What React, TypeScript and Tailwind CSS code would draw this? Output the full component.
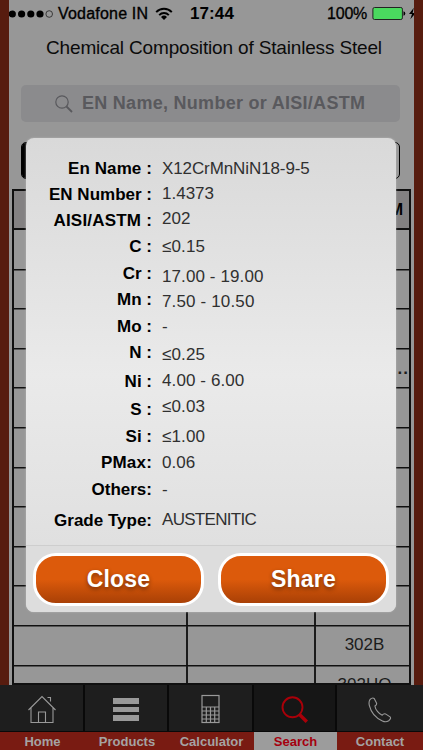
import React from "react";

interface Field {
    text: string;
    className: string;
}

interface TabProps {
    label: string;
    width: string;
    active?: boolean;
    last?: boolean;
    children: React.ReactNode;
}

const labels: Field[] = [
    {text: "En Name :", className: "mt-[20px] tracking-[0.1px]"},
    {text: "EN Number :", className: "mt-[6px]"},
    {text: "AISI/ASTM :", className: "mt-[6px] tracking-[0.2px]"},
    {text: "C :", className: "mt-[6px]"},
    {text: "Cr :", className: "mt-[7px]"},
    {text: "Mn :", className: "mt-[6px]"},
    {text: "Mo :", className: "mt-[7px]"},
    {text: "N :", className: "mt-[6px]"},
    {text: "Ni :", className: "mt-[9px]"},
    {text: "S :", className: "mt-[8px]"},
    {text: "Si :", className: "mt-[7px]"},
    {text: "PMax:", className: "mt-[6px] tracking-[0.2px]"},
    {text: "Others:", className: "mt-[7px]"},
    {text: "Grade Type:", className: "mt-[11px]"},
];

const values: Field[] = [
    {text: "X12CrMnNiN18-9-5", className: "mt-[20px] tracking-[-0.1px]"},
    {text: "1.4373", className: "mt-[5px]"},
    {text: "202", className: "mt-[5px]"},
    {text: "≤0.15", className: "mt-[8px] tracking-[0.15px]"},
    {text: "17.00 - 19.00", className: "mt-[10px] tracking-[0.1px]"},
    {text: "7.50 - 10.50", className: "mt-[5px] tracking-[0.15px]"},
    {text: "-", className: "mt-[5px]"},
    {text: "≤0.25", className: "mt-[8px] tracking-[0.15px]"},
    {text: "4.00 - 6.00", className: "mt-[6px] tracking-[0.1px]"},
    {text: "≤0.03", className: "mt-[6px] tracking-[0.15px]"},
    {text: "≤1.00", className: "mt-[10px] tracking-[0.15px]"},
    {text: "0.06", className: "mt-[6px]"},
    {text: "-", className: "mt-[7px]"},
    {text: "AUSTENITIC", className: "mt-[10px] tracking-[-0.7px]"},
];

const grades = ["", "", "", "....", "", "", "", "", "", "", "302B", "302HQ"];

const StatusBar = () => (
    <div className="flex h-[27px] items-center overflow-hidden text-[17px] leading-none text-black">
        <svg width="46" height="10" viewBox="0 0 46 10" className="shrink-0">
            <circle cx="3.3" cy="5" r="3.6" />
            <circle cx="12.6" cy="5" r="3.6" />
            <circle cx="21.8" cy="5" r="3.6" />
            <circle cx="31" cy="5" r="3.6" />
            <circle cx="40.2" cy="5" r="3.3" fill="none" stroke="#222" strokeWidth="0.8" />
        </svg>
        <span className="ml-[3px] w-[91px] shrink-0 whitespace-nowrap text-[16px] tracking-[0.2px] [-webkit-text-stroke:0.35px_black]">Vodafone IN</span>
        <svg width="18" height="13" viewBox="0 0 18 13" className="ml-[6px] shrink-0" fill="none" stroke="black" strokeWidth="2">
            <path d="M1.2 5.1a11 11 0 0 1 15.6 0" />
            <path d="M4.2 8.1a6.8 6.8 0 0 1 9.6 0" />
            <path d="M6 9.9a4.3 4.3 0 0 1 6 0L9 12.9z" fill="black" stroke="none" />
        </svg>
        <span className="ml-[17px] w-[46px] shrink-0 text-[17px] font-bold tracking-[0.1px]">17:44</span>
        <span className="ml-[91px] w-[41px] shrink-0 whitespace-nowrap text-[16px] tracking-[-0.2px] [-webkit-text-stroke:0.3px_black]">100%</span>
        <svg width="44" height="15" viewBox="0 0 44 15" className="ml-[4px] shrink-0">
            <rect x="0.9" y="1.5" width="29.5" height="12" rx="1.6" fill="#4ad95f" stroke="#222" strokeWidth="1" />
            <path d="M31.5 5.2q1.8.6 1.8 2.3t-1.8 2.3z" />
            <path d="M41.8 1.8 37 8h3l-1.7 5.2L43.8 7h-3.2z" />
        </svg>
    </div>
);

const GradeTable = () => (
    <div className="ml-[3px] mt-[10px] h-[496px] w-[399px] overflow-hidden border-2 border-[#101010] text-[17px] text-[#1c1c1c]">
        <div className="flex h-[39px] border-b-2 border-[#101010] bg-[#838182] font-bold text-black">
            <div className="w-[173px] border-r-2 border-[#101010]" />
            <div className="w-[128px] border-r-2 border-[#101010]" />
            <div className="flex flex-1 items-center justify-end pr-[6px] text-[16px]">AISI/ASTM</div>
        </div>
        {grades.map((grade, i) => (
            <div key={i} className="flex h-[39.6px] border-b border-[#101010] shadow-[0_1px_0_#555]">
                <div className="w-[174px] border-r-2 border-[#1b1b1b]" />
                <div className="w-[128px] border-r-2 border-[#1b1b1b]" />
                <div className={i === 3 ? "flex flex-1 items-center justify-end pt-[2px] tracking-[1px] font-bold" : "flex flex-1 items-center justify-center pl-[4px]"}>{grade}</div>
            </div>
        ))}
    </div>
);

const ModalButton = ({label}: {label: string}) => (
    <button className="h-[53px] w-[171px] rounded-[23px] border-[3.5px] border-white bg-linear-to-b from-[#dc5a0b] from-50% to-[#a94006] pb-[1px] text-[23px] font-bold tracking-[0.2px] text-white [text-shadow:0_2px_4px_rgba(0,0,0,0.45)]">
        {label}
    </button>
);

const DetailModal = () => (
    <div className="absolute left-[26px] top-[138px] flex h-[474px] w-[370px] flex-col overflow-hidden rounded-[8px] bg-linear-to-b from-[#d9d9d9] via-[#eaeaea] via-50% to-[#dcdcdc] shadow-[0_0_2px_#bbb]">
        <div className="flex h-[407px] pt-px text-[17px]">
            <div className="flex w-[126px] flex-col items-end whitespace-nowrap font-bold text-black">
                {labels.map((field) => (
                    <div key={field.text} className={`h-5 leading-5 ${field.className}`}>{field.text}</div>
                ))}
            </div>
            <div className="ml-[10px] flex flex-col whitespace-nowrap text-[#303030]">
                {values.map((field, i) => (
                    <div key={i} className={`h-5 leading-5 ${field.className}`}>{field.text}</div>
                ))}
            </div>
        </div>
        <div className="flex flex-1 gap-[14px] border-t border-[#cecece] bg-[#dddddd] pl-[7px] pt-[7px]">
            <ModalButton label="Close" />
            <ModalButton label="Share" />
        </div>
    </div>
);

const Tab: React.FC<TabProps> = ({label, width, active, last, children}) => (
    <div className={`flex flex-col ${width}`}>
        <div className={`flex h-[47px] items-center justify-center border-b border-[#090909] ${last ? "" : "border-r-2"} ${active ? "bg-[#161616]" : "bg-[#1e1e1e]"}`}>
            {children}
        </div>
        <div className={`h-[18px] text-center text-[13px] leading-[19px] font-bold ${active ? "bg-[#9c9c9c] text-[#a5000e]" : "bg-[#791b12] text-[#a5a3a3]"}`}>
            {label}
        </div>
    </div>
);

const TabBar = () => (
    <div className="flex h-[65px] bg-[#1e1e1e]">
        <Tab label="Home" width="w-[85px]">
            <svg width="30" height="30" viewBox="0 0 30 30" fill="none" stroke="#999" strokeWidth="1.1" className="mt-[2px]">
                <path d="M1.5 16 15 2.5 28.5 16M4 14v14.5h22V14M11.5 28.5V18h7v10.5M20.5 3.5h3v4" />
            </svg>
        </Tab>
        <Tab label="Products" width="w-[84px]">
            <div className="mt-[2px] flex w-[26px] flex-col gap-[3px]">
                <div className="h-[6px] bg-[#999]" />
                <div className="h-[5px] bg-[#999]" />
                <div className="h-[6px] bg-[#999]" />
            </div>
        </Tab>
        <Tab label="Calculator" width="w-[85px]">
            <svg width="19" height="30" viewBox="0 0 19 30" className="mt-[2px]" fill="none" stroke="#999" strokeWidth="1.2">
                <rect x="1" y="1.5" width="17" height="27" />
                <path d="M1 13h17M1 17h17M1 21h17M1 25h17M5.3 13v15M9.5 13v15M13.7 13v15" />
            </svg>
        </Tab>
        <Tab label="Search" width="w-[83px]" active>
            <svg width="28" height="28" viewBox="0 0 28 28" className="mt-[3px]" fill="none" stroke="#a90009">
                <circle cx="11.5" cy="11.3" r="10" strokeWidth="1.9" />
                <path d="m18.5 18.5 7.3 7.3" strokeWidth="3.4" />
            </svg>
        </Tab>
        <Tab label="Contact" width="w-[86px]" last>
            <svg width="24" height="26" viewBox="0 0 24 26" className="mt-[3px]" fill="none" stroke="#999" strokeWidth="1.1" strokeLinejoin="round">
                <path d="M2 2.5C3.5 1 5 .5 6.2 1.5L8.500 6c.5 1.3-.2 2.2-1.6 3 .4 3.5 4 7.9 7.3 9.2 1-1.3 2-1.9 3.3-1.3l4.6 3c1 1.1.2 2.6-1.4 3.8-2 1.4-4.2 1.3-6.3.2C7.9 21 3 15.3 1.3 8.3.8 6 1 4 2 2.5z" />
            </svg>
        </Tab>
    </div>
);

const App = () => (
    <div className="relative h-[750px] w-[423px] overflow-hidden bg-[#571c0f] font-['Liberation_Sans',Arial,sans-serif]">
        <div className="ml-[9px] h-[685px] w-[405px] bg-[#979797]">
            <StatusBar />
            <h1 className="h-[58px] whitespace-nowrap pl-[37px] pt-[9px] text-[19px] leading-6 tracking-[-0.16px] text-[#0b0b0b]">Chemical Composition of Stainless Steel</h1>
            <div className="ml-[12px] flex h-[37px] w-[379px] items-center rounded-[5px] bg-[#8b8b8d] pl-[34px] text-[18px] font-bold text-[#59595d]">
                <svg width="18" height="18" viewBox="0 0 18 18" fill="none" stroke="#59595d" strokeWidth="1.2">
                    <circle cx="7" cy="7" r="6.2" />
                    <path d="m11.5 11.5 5.5 5.5" strokeWidth="1.8" />
                </svg>
                <span className="ml-[9px] whitespace-nowrap tracking-[0.28px]">EN Name, Number or AISI/ASTM</span>
            </div>
            <div className="ml-[12px] mt-[20px] flex h-[37px] w-[379px] overflow-hidden rounded-[5px] border border-black">
                <div className="w-[126px] bg-black" />
            </div>
            <GradeTable />
        </div>
        <TabBar />
        <DetailModal />
    </div>
);

export default App;
